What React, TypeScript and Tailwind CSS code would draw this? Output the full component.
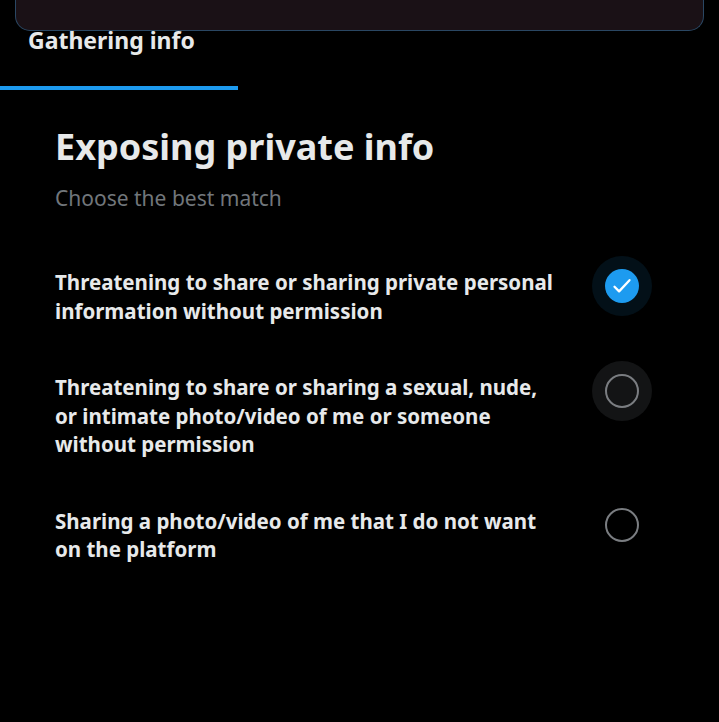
const options = [
  {
    id: "private-info",
    label: "Threatening to share or sharing private personal information without permission",
    checked: true,
    halo: "bg-[#031018]",
  },
  {
    id: "intimate-media",
    label: "Threatening to share or sharing a sexual, nude, or intimate photo/video of me or someone without permission",
    checked: false,
    halo: "bg-[#131415]",
  },
  {
    id: "unwanted-media",
    label: "Sharing a photo/video of me that I do not want on the platform",
    checked: false,
    halo: "",
  },
];

function Radio({ checked, halo }: { checked: boolean; halo: string }) {
  return (
    <div className={`flex h-[60px] w-[60px] shrink-0 items-center justify-center rounded-full ${halo}`}>
      {checked ? (
        <div className="flex h-[34px] w-[34px] items-center justify-center rounded-full bg-[#1d9bf0]">
          <svg width="24" height="24" viewBox="0 0 24 24" fill="none">
            <path d="M4.5 12.8l4.6 4.6L19.5 6.2" stroke="#fff" strokeWidth="2.3" strokeLinecap="round" strokeLinejoin="round" />
          </svg>
        </div>
      ) : (
        <div className="h-[34px] w-[34px] rounded-full border-[2.5px] border-[#7a7d81]" />
      )}
    </div>
  );
}

export default function App() {
  return (
    <div className="h-[722px] w-[719px] overflow-hidden bg-black text-[#e7e9ea]" style={{ fontFamily: '"Noto Sans", "Open Sans", sans-serif' }}>
      <div className="mx-[15px] h-[31px] rounded-b-[15px] border border-t-0 border-[#2a4763] bg-[#1a1116]" />

      <div className="w-[238px]">
        <div className="-mt-[3px] pl-[28px] text-[23px] font-bold leading-[24px]">Gathering info</div>
        <div className="mt-[34px] h-[4px] bg-[#1d9bf0]" />
      </div>

      <div className="pl-[55px] pr-[67px] pt-[35px]">
        <h1 className="text-[36px] font-bold leading-[44px] text-[#e7e9ea]">Exposing private info</h1>
        <p className="mt-[16px] text-[21px] leading-[26px] text-[#71767b]">Choose the best match</p>

        <div className="mt-[45px] flex flex-col">
          {options.map((o, i) => (
            <div key={o.id} className={`flex items-start justify-between gap-[30px] ${i > 0 ? "mt-[36px]" : ""}`}>
              <div className="max-w-[503px] pt-[12px] text-[20.5px] font-bold leading-[28.5px]">{o.label}</div>
              <Radio checked={o.checked} halo={o.halo} />
            </div>
          ))}
        </div>
      </div>
    </div>
  );
}
